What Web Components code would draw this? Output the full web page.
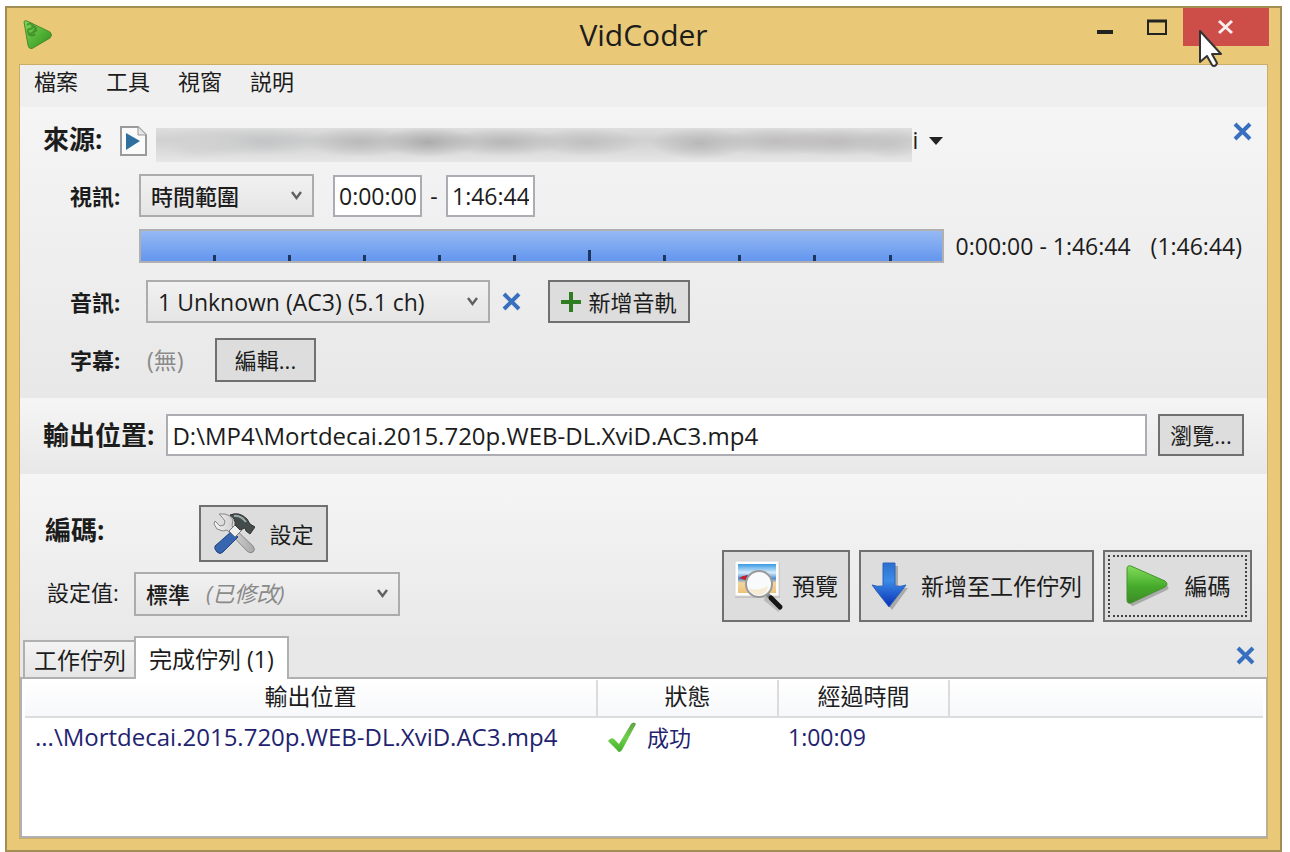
<!DOCTYPE html>
<html lang="zh-Hant">
<head>
<meta charset="utf-8">
<title>VidCoder</title>
<style>
html, body { height: 100%; margin: 0; }
body {
  box-sizing: border-box;
  display: flex;
  padding: 6px 8px 0 5px;
  background: #fff;
  color: #1c1c1c;
  font: 23px/28px "Open Sans", "Noto Sans CJK TC", sans-serif;
}
</style>
</head>
<body>
<vc-window>
  <vc-titlebar slot="title">VidCoder</vc-titlebar>
  <vc-menubar></vc-menubar>
  <vc-source></vc-source>
  <vc-output></vc-output>
  <vc-encode></vc-encode>
  <vc-queue></vc-queue>
</vc-window>

<script>
const controls = `
  * { box-sizing: border-box; }
  button, input, select { font: inherit; color: inherit; margin: 0; border-radius: 0; }
  input { background: #fff; border: 2px solid #abadb3; padding: 0 4px; min-width: 0; height: 42px; }
  select {
    appearance: none; height: 43px; border: 2px solid #acacac; padding: 0 30px 0 10px; min-width: 0;
    background: linear-gradient(#f1f1f1, #e5e5e5);
  }
  .select { position: relative; display: flex; }
  .select select { flex: 1; }
  .select vc-icon { position: absolute; right: 12px; top: 17px; pointer-events: none; }
  .plain { border: 0; background: none; padding: 0; display: flex; }
  .row { display: flex; align-items: center; }
  h2, label { margin: 0; white-space: nowrap; }
  .heading { font-size: 26px; line-height: 34px; font-weight: 700; }
  .cjk { font-size: 22px; }
  .muted { color: #8a8a8a; }
`;

function define(name, css, html) {
  const template = document.createElement('template');
  template.innerHTML = `<style>${css}</style>${html}`;
  customElements.define(name, class extends HTMLElement {
    constructor() {
      super();
      this.attachShadow({ mode: 'open' }).append(template.content.cloneNode(true));
    }
  });
}

/* Icons: [width, height, markup] */
const icons = {
  app: [30, 30, `<defs><linearGradient id="g" x1="0" y1="0" x2="1" y2="1"><stop stop-color="#7ed957"/><stop offset="1" stop-color="#2f8f1c"/></linearGradient></defs>
    <path d="M1 2Q1 0 4 1L27 12Q30 15 27 18L10 28Q6 30 5 25Z" fill="url(#g)" stroke="#4a8a2c"/>
    <path d="M4 5q3-3 5 0t-2 4q-3 0-2 3t4 1 5-3M9 5l4 3-2 3M5 14q4 3 7 0" fill="none" stroke="#2c6f18" stroke-width="2" opacity=".55"/>`],
  minimize: [16, 16, `<path d="M0 13h16" stroke="#222" stroke-width="4"/>`],
  maximize: [20, 16, `<path d="M1 2v13h18V2" fill="none" stroke="#222" stroke-width="2"/><path d="M0 2h20" stroke="#222" stroke-width="3"/>`],
  close: [18, 18, `<path d="M2 3 15 15M15 3 2 15" stroke="#fbeeee" stroke-width="3"/>`],
  cursor: [24, 38, `<path d="M1 1v31l7-6 5 9q2 2 4 0l1-2-5-9h9Z" fill="#fff" stroke="#333" stroke-width="2" stroke-linejoin="round"/>`],
  remove: [19, 19, `<path d="M2 2 17 17M17 2 2 17" stroke="#3870bf" stroke-width="4" fill="none"/>`],
  file: [27, 30, `<path d="M1 1h17l8 8v20H1Z" fill="#fafafa" stroke="#9a9a9a" stroke-width="2"/><path d="M18 1v8h8" fill="#e5e5e5" stroke="#999" stroke-width="1"/><path d="M6 7 20 15 6 24Z" fill="#2f6f9d"/>`],
  drop: [16, 9, `<path d="M1 0h14L8 8Z" fill="#222"/>`],
  chevron: [11, 9, `<path d="M1 1 5.5 7 10 1" fill="none" stroke="#606060" stroke-width="2.4"/>`],
  plus: [20, 20, `<path d="M10 0v20M0 10h20" stroke="#2e7d20" stroke-width="4"/>`],
  tools: [42, 42, `<defs><linearGradient id="s"><stop stop-color="#f4f4f4"/><stop offset="1" stop-color="#a8a8a8"/></linearGradient></defs>
    <path d="M6 1 8 3 12 8 11 12 7 13 2 8 1 11 4 16 10 18 14 17 34 38q3 3 6 1t0-6L19 13l1-6q-2-5-8-6Z" fill="url(#s)" stroke="#888"/>
    <path d="m19 18 6 6-15 15q-3 3-6 0t-2-6Z" fill="#3865b0" stroke="#24477f"/>
    <path d="m23 11 6 6-7 7-6-6Z" fill="#eee" stroke="#777"/>
    <path d="M17 2q9-4 17 4l3 5 5 3-5 7-4-3-1-3-5 2-5-5q1-6-5-10Z" fill="#444b4b" stroke="#333"/><path d="M21 3q7-1 12 6" stroke="#9aa" stroke-width="2" fill="none"/>`],
  preview: [50, 52, `<defs><linearGradient id="sky" x2="0" y2="1"><stop stop-color="#3a9be5"/><stop offset=".3" stop-color="#d6ecfa"/><stop offset=".5" stop-color="#4c8fd8"/><stop offset=".65" stop-color="#f4d79a"/><stop offset="1" stop-color="#eec27a"/></linearGradient></defs>
    <path d="M1 3h45v35H1Z" fill="#aaa" opacity=".5"/><path d="M1 1h44v35H1Z" fill="#fff" stroke="#d5d5d5"/><path d="M4 4h38v29H4Z" fill="url(#sky)"/>
    <path d="M5 18q7-5 14-1l-3 5-8-3Z" fill="#c3202d"/><path d="M12 15l6 3-2 4Z" fill="#33308a"/>
    <path d="m31 38 15 12" stroke="#999" stroke-width="5" opacity=".5"/><path d="m32 33 5 5" stroke="#888" stroke-width="4"/><path d="m37 38 9 9" stroke="#151515" stroke-width="5" stroke-linecap="round"/>
    <circle cx="25" cy="24" r="13" fill="#f8fafc" stroke="#9a9a9a" stroke-width="2"/><path d="M15 28q8 4 19-2-1 9-9 9t-10-7Z" fill="#f7e2b8" opacity=".6"/>`],
  down: [38, 48, `<defs><linearGradient id="b" x2="0" y2="1"><stop stop-color="#2d6fce"/><stop offset=".4" stop-color="#3b8be8"/><stop offset="1" stop-color="#0a2fb4"/></linearGradient></defs>
    <path d="M14 4h13v22h10L21 48 4 28h10Z" fill="#777" opacity=".5"/><path d="M12 1h12v23q6 1 11-1L18 45 1 23q5 2 11 1Z" fill="url(#b)" stroke="#2b63bb"/>`],
  play: [44, 42, `<defs><linearGradient id="p" x2="0" y2="1"><stop stop-color="#82dd5a"/><stop offset=".55" stop-color="#46ab2b"/><stop offset="1" stop-color="#3c8b28"/></linearGradient></defs>
    <path d="M5 7 42 20q3 3 0 5L8 41q-3 0-3-4Z" fill="#777" opacity=".5"/><path d="M2 4q0-4 4-3l34 15q4 3 0 6L6 38q-4 1-4-3Z" fill="url(#p)" stroke="#45922f"/>`],
  check: [30, 31, `<defs><linearGradient id="c" x2="0" y2="1"><stop stop-color="#5f9f4a"/><stop offset=".5" stop-color="#6fd04c"/><stop offset="1" stop-color="#43b02a"/></linearGradient></defs>
    <path d="M1 19q3-4 6-2l5 5L24 2q3-3 5 0L15 28q-3 4-5 0Z" fill="url(#c)"/>`]
};
customElements.define('vc-icon', class extends HTMLElement {
  connectedCallback() {
    if (this.shadowRoot) return;
    const [w, h, body] = icons[this.getAttribute('name')];
    this.attachShadow({ mode: 'open' }).innerHTML =
      `<style>:host{display:block;flex:none;width:${w}px;height:${h}px}svg{display:block}</style>
       <svg width="${w}" height="${h}" viewBox="0 0 ${w} ${h}" aria-hidden="true">${body}</svg>`;
  }
});

define('vc-button', `
  :host { display: flex; flex: none; font-size: 22px; }
  button {
    box-sizing: border-box; width: 100%; display: flex; align-items: center; justify-content: center;
    gap: var(--gap, 8px); padding: 0 var(--pad, 8px); font: inherit; color: inherit;
    background: #ddd; border: 2px solid #707070; border-radius: 0; white-space: nowrap;
  }
  :host([focused]) button { outline: 2px dotted #444; outline-offset: -7px; }
`, `<button type="button"><slot name="icon"></slot><slot></slot></button>`);

define('vc-window', `
  :host { flex: 1; min-width: 0; box-sizing: border-box; display: flex; flex-direction: column;
    background: #e9c977; border: 2px solid #a08e55; }
  main { flex: 1; display: flex; flex-direction: column; margin: 0 12px 11px; border: 1px solid #c9ad68; background: #e8e8e8; min-height: 0; }
`, `<slot name="title"></slot><main><slot></slot></main>`);

define('vc-titlebar', `
  ${controls}
  :host { display: grid; grid-template-columns: 1fr auto 1fr; height: 56px; }
  .app { padding: 12px 0 0 16px; }
  h1 { margin: 0; font: inherit; font-size: 30px; line-height: 54px; }
  .buttons { display: flex; justify-content: flex-end; align-items: flex-start; padding-right: 11px; position: relative; }
  .buttons .plain { width: 52px; height: 38px; align-items: center; justify-content: center; }
  .buttons .close { width: 86px; background: #cd4d49; }
  .cursor { position: absolute; right: 57px; top: 22px; pointer-events: none; }
`, `<div class="app"><vc-icon name="app"></vc-icon></div>
  <h1><slot></slot></h1>
  <div class="buttons">
    <button class="plain" aria-label="Minimize"><vc-icon name="minimize"></vc-icon></button>
    <button class="plain" aria-label="Maximize"><vc-icon name="maximize"></vc-icon></button>
    <button class="plain close" aria-label="Close"><vc-icon name="close"></vc-icon></button>
    <vc-icon class="cursor" name="cursor"></vc-icon>
  </div>`);

define('vc-menubar', `
  ${controls}
  :host { display: block; background: #efefef; }
  nav { display: flex; gap: 28px; padding: 2px 14px 12px; }
`, `<nav><button class="plain cjk">檔案</button><button class="plain cjk">工具</button><button class="plain cjk">視窗</button><button class="plain cjk">説明</button></nav>`);

define('vc-timeline', `
  :host { display: grid; grid-template-columns: repeat(10, 3fr) 2fr; flex: 1; min-width: 0; height: 34px;
    box-sizing: border-box; border: 2px solid #b0b0b0;
    background: linear-gradient(#97b9f4, #6396ee); align-items: end; justify-items: end; }
  i { width: 3px; height: 6px; background: #1c365f; }
  i.mid { height: 11px; }
`, `<i></i><i></i><i></i><i></i><i></i><i class="mid"></i><i></i><i></i><i></i><i></i>`);

define('vc-source', `
  ${controls}
  :host { display: block; padding: 15px 23px 16px; background: linear-gradient(#f5f5f5, #e8e8e8); }
  .file { height: 52px; align-items: flex-start; }
  .file vc-icon[name=file] { margin: 4px 9px 0 18px; }
  .blur { flex: 0 1 756px; min-width: 0; height: 34px; margin-top: 6px;
    background:
      radial-gradient(ellipse 30px 16px at 5% 45%, #d2d2d2, #0000),
      radial-gradient(ellipse 40px 16px at 8% 42%, #d0d0d0, #0000),
      radial-gradient(ellipse 70px 14px at 14% 40%, #c3c5c6, #0000),
      radial-gradient(ellipse 55px 15px at 27% 42%, #bababa, #0000),
      radial-gradient(ellipse 50px 15px at 36% 42%, #acacac, #0000),
      radial-gradient(ellipse 60px 14px at 46% 42%, #b8b8b8, #0000),
      radial-gradient(ellipse 55px 14px at 57% 42%, #c0c0c0, #0000),
      radial-gradient(ellipse 50px 16px at 72% 45%, #b8b8b8, #0000),
      radial-gradient(ellipse 60px 14px at 82% 40%, #bfbdbd, #0000),
      radial-gradient(ellipse 60px 14px at 90% 42%, #bebcbc, #0000),
      radial-gradient(ellipse 35px 15px at 97% 45%, #c4c4c4, #0000),
      linear-gradient(#dedede, #d0d0d0 35%, #e6e6e6); }
  .drop { margin: 15px auto 0 10px; }
  .ext { line-height: 36px; }
  .clear { margin-right: -8px; }
  .field { padding-left: 27px; }
  .field label, .field h2 { width: 69px; font-size: 22px; line-height: 28px; font-weight: 700; flex: none; }
  .time { width: 89px; }
  .range { width: 175px; margin-right: 19px; font-weight: 500; }
  .dash { width: 24px; text-align: center; }
  .line { padding-left: 96px; margin: 12px 0 17px; }
  .times { display: flex; gap: 20px; margin: 0 2px 0 12px; white-space: nowrap; }
  .audio { width: 344px; margin: 0 12px 0 7px; }
  .add { margin-left: 27px; width: 142px; height: 43px; --gap: 7px; --pad: 6px; }
  .subs { margin-top: 15px; }
  .subs .muted { width: 69px; padding-left: 8px; margin-right: 7px; }
  .edit { width: 101px; height: 44px; }
`, `
  <div class="row file"><h2 class="heading">來源:</h2><vc-icon name="file"></vc-icon><div class="blur"></div><span class="ext">i</span>
    <button class="plain drop" aria-label="來源"><vc-icon name="drop"></vc-icon></button>
    <button class="plain clear" aria-label="關閉來源"><vc-icon name="remove"></vc-icon></button></div>
  <div class="row field"><label for="range">視訊:</label>
    <div class="select range"><select id="range" class="cjk"><option>時間範圍</option></select><vc-icon name="chevron"></vc-icon></div>
    <input class="time" aria-label="開始時間" value="0:00:00"><span class="dash">-</span><input class="time" aria-label="結束時間" value="1:46:44"></div>
  <div class="row line"><vc-timeline></vc-timeline><div class="times"><span>0:00:00 - 1:46:44</span><span>(1:46:44)</span></div></div>
  <div class="row field"><label for="audio">音訊:</label>
    <div class="select audio"><select id="audio"><option>1 Unknown (AC3) (5.1 ch)</option></select><vc-icon name="chevron"></vc-icon></div>
    <button class="plain" aria-label="移除音軌"><vc-icon name="remove"></vc-icon></button>
    <vc-button class="add"><vc-icon slot="icon" name="plus"></vc-icon>新增音軌</vc-button></div>
  <div class="row field subs"><h2>字幕:</h2><span class="muted">(無)</span><vc-button class="edit">編輯...</vc-button></div>
`);

define('vc-output', `
  ${controls}
  :host { display: flex; align-items: center; padding: 16px 23px 18px; background: linear-gradient(#f5f5f5, #e8e8e8); }
  input { flex: 1; margin: 0 11px 0 12px; font-size: 24px; }
  vc-button { width: 86px; height: 42px; }
`, `<label class="heading" for="out">輸出位置:</label><input id="out" value="D:\\MP4\\Mortdecai.2015.720p.WEB-DL.XviD.AC3.mp4"><vc-button>瀏覽...</vc-button>`);

define('vc-encode', `
  ${controls}
  :host { display: flex; justify-content: space-between; align-items: flex-end; padding: 31px 15px 14px 25px;
    background: linear-gradient(#f5f5f5, #e9e9e9); }
  .settings { margin-bottom: 10px; align-items: flex-start; }
  .settings .heading { width: 154px; padding-top: 8px; }
  .settings vc-button { width: 129px; height: 57px; --gap: 14px; }
  .preset { margin-bottom: 6px; }
  .preset label { width: 89px; padding: 0 0 4px 2px; }
  .preset .select { width: 266px; }
  .preset select { font-weight: 500; height: 44px; }
  .preset .muted { position: absolute; left: 72px; top: 7px; font-style: italic; pointer-events: none; }
  .actions { gap: 9px; }
  .actions vc-button { height: 72px; font-size: 23px; }
  .preview { width: 128px; --pad: 4px; }
  .enqueue { width: 235px; --gap: 12px; }
  .start { width: 149px; --gap: 16px; }
`, `<div>
    <div class="row settings"><h2 class="heading">編碼:</h2><vc-button><vc-icon slot="icon" name="tools"></vc-icon>設定</vc-button></div>
    <div class="row preset"><label class="cjk" for="preset">設定值:</label>
      <div class="select"><select id="preset" class="cjk"><option>標準</option></select><span class="cjk muted">(已修改)</span><vc-icon name="chevron"></vc-icon></div></div>
  </div>
  <div class="row actions">
    <vc-button class="preview"><vc-icon slot="icon" name="preview"></vc-icon>預覽</vc-button>
    <vc-button class="enqueue"><vc-icon slot="icon" name="down"></vc-icon>新增至工作佇列</vc-button>
    <vc-button class="start" focused><vc-icon slot="icon" name="play"></vc-icon>編碼</vc-button>
  </div>`);

define('vc-queue', `
  ${controls}
  :host { flex: 1; display: flex; flex-direction: column; min-height: 0; }
  .tabs { display: flex; align-items: flex-end; padding-left: 3px; }
  .tab { border: 2px solid #b0b0b0; border-bottom: 0; padding: 0 9px; height: 37px; line-height: 32px; background: linear-gradient(#f3f3f3, #e6e6e6); white-space: nowrap; }
  .tab[aria-selected=true] { position: relative; height: 43px; margin: 0 0 -2px -3px; padding: 0 13px; background: #fff; }
  .tabs .plain { margin: 0 12px 12px auto; }
  .panel { flex: 1; border: 2px solid #b0b0b0; border-width: 2px 1px 2px 2px; background: #fff; padding: 1px 3px; }
  table { border-collapse: collapse; table-layout: fixed; width: 100%; }
  th { font-weight: 400; height: 37px; padding: 0 0 4px; border: solid #dcdcdc; border-width: 0 2px 2px 0; background: linear-gradient(#fff, #f7f8fa); }
  th:last-child { border-right: 0; }
  td { height: 39px; padding: 0 10px; color: #1f2370; white-space: nowrap; }
  td:first-child { font-size: 24px; }
  td .row { gap: 10px; }
`, `<div class="tabs" role="tablist"><button role="tab" class="tab" aria-selected="false">工作佇列</button><button role="tab" class="tab" aria-selected="true">完成佇列 (1)</button>
    <button class="plain" aria-label="關閉"><vc-icon name="remove"></vc-icon></button></div>
  <div class="panel"><table>
    <colgroup><col style="width:572px"><col style="width:181px"><col style="width:171px"><col></colgroup>
    <thead><tr><th>輸出位置</th><th>狀態</th><th>經過時間</th><th></th></tr></thead>
    <tbody><tr><td>...\\Mortdecai.2015.720p.WEB-DL.XviD.AC3.mp4</td><td><div class="row"><vc-icon name="check"></vc-icon><span class="cjk">成功</span></div></td><td>1:00:09</td><td></td></tr></tbody>
  </table></div>`);
</script>
</body>
</html>
